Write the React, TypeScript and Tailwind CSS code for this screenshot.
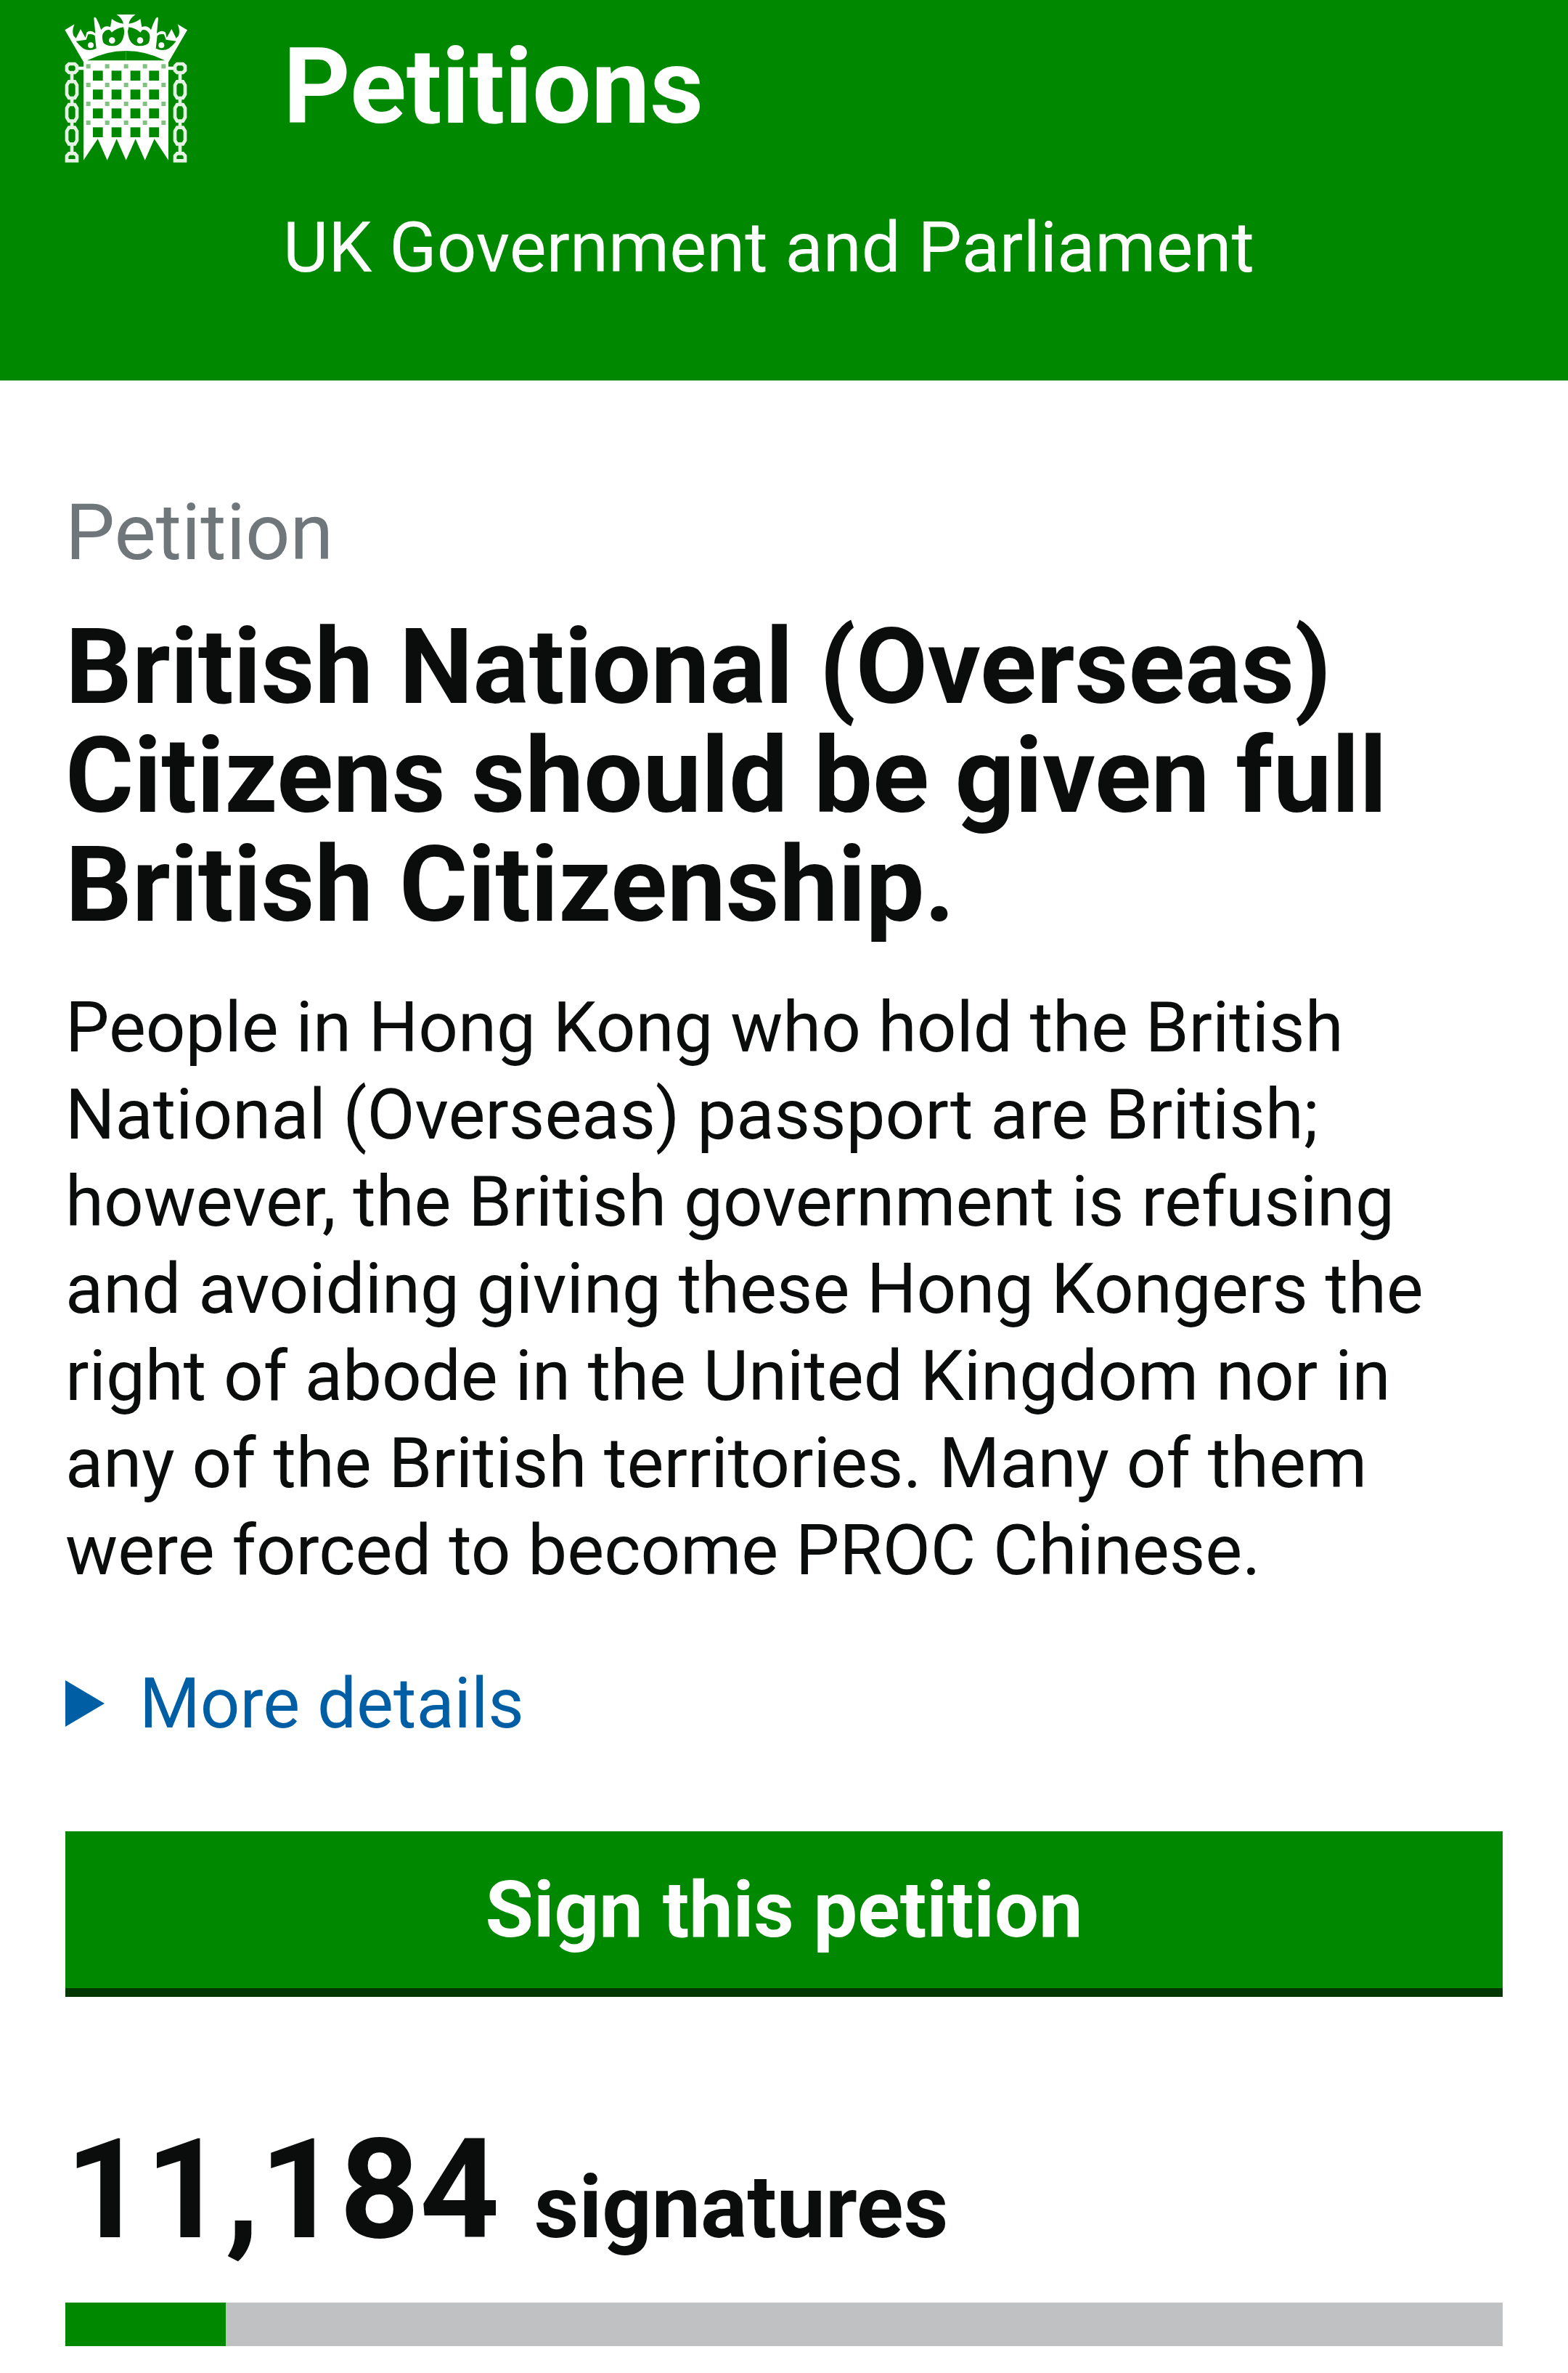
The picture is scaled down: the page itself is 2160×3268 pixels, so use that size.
import { useState } from "react";

const SIGNATURES = 11184;
const TARGET = 100000;

const COLUMNS = [174, 251, 329, 406];
const RIVETS = [155, 233, 311, 389, 466];
const LINKS = [371, 466, 561];

// Hanging chain at the side of the portcullis, cx is the centre of the links
const Chain = ({ cx }: { cx: number }) => (
  <g fill="none" stroke="#e4f3e4" strokeWidth={14}>
    <path d={`M${cx - 12} 264h24l9 9v18l-9 9h-24l-9-9v-18z`} />
    {LINKS.map((y) => (
      <path key={y} d={`M${cx - 12} ${y - 34}h24l9 15v38l-9 15h-24l-9-15v-38z`} />
    ))}
    {[319, 418, 513, 613].map((y) => (
      <path key={y} d={`M${cx} ${y - 16}v32`} />
    ))}
    <path d={`M${cx - 12} 634h24l9 10v20h-42v-20z`} />
  </g>
);

// Left half of the crown, drawn twice with the second one mirrored
const CrownHalf = () => (
  <>
    <path d="M135 256L58 124L98 100Q86 126 94 148L104 158L123 120L143 156L148 134Q164 120 184 138L178 74Q182 68 188 76Q200 98 208 124Q222 102 246 112L252 78Q270 94 300 98Q296 76 272 60H312V256z" />
    <path fill="#008800" d="M104 170L146 164L154 142Q172 138 182 148L188 200Q160 214 134 200Q116 186 104 170z" />
    <path fill="#008800" d="M214 142Q226 118 244 124L252 134Q272 116 300 112L304 130Q300 180 270 188Q236 194 218 178Q210 160 214 142z" />
    <circle cx={165} cy={187} r={12} />
    <circle cx={253} cy={167} r={13} />
    <path fill="#008800" d="M150 250Q228 210 312 210V250z" />
  </>
);

const Portcullis = () => (
  <svg className="h-[204px] w-[168px] overflow-visible text-white" viewBox="60 60 504 612" fill="currentColor" aria-hidden="true">
    <CrownHalf />
    <g transform="matrix(-1 0 0 1 622 0)">
      <CrownHalf />
    </g>
    <path d="M135 254H486V662L428 574L389 662L350 574L311 662L272 574L233 662L194 574L135 662z" />
    {[292, 370, 448, 526].map((y) =>
      COLUMNS.map((x) => <rect key={`${x}-${y}`} x={x} y={y} width={41} height={41} fill="#008800" />)
    )}
    {[274, 351, 429, 507].map((y) =>
      RIVETS.map((x) => <rect key={`${x}-${y}`} x={x - 9} y={y - 9} width={18} height={18} fill="#80c380" />)
    )}
    <path d="M110 275H140V289H110zM482 275H512V289H482z" />
    <Chain cx={87} />
    <Chain cx={534} />
  </svg>
);

const Header = () => (
  <header className="flex items-start gap-[132px] bg-[#008800] px-[90px] pt-5 pb-[123px] text-white">
    <Portcullis />
    <div className="pt-[25px]">
      <a href="#" className="block text-[144px] leading-[150px] font-bold">Petitions</a>
      <p className="mt-[86px] text-[96px] leading-[120px]">UK Government and Parliament</p>
    </div>
  </header>
);

const App = () => {
  const [open, setOpen] = useState(false);

  return (
    <div className="min-h-screen bg-white font-[Roboto,sans-serif] text-[#0b0c0c]">
      <Header />
      <main className="px-[90px] pt-[149px] pb-9">
        <p className="text-[108px] leading-[120px] text-[#6f777b]">Petition</p>
        <h1 className="mt-[51px] text-[144px] leading-[150px] font-bold">
          British National (Overseas) Citizens should be given full British Citizenship.
        </h1>
        <p className="mt-[61px] text-[96px] leading-[120px]">
          People in Hong Kong who hold the British National (Overseas) passport are British; however, the British
          government is refusing and avoiding giving these Hong Kongers the right of abode in the United Kingdom nor
          in any of the British territories. Many of them were forced to become PROC Chinese.
        </p>
        <button
          aria-expanded={open}
          onClick={() => setOpen(!open)}
          className="mt-[91px] flex items-center gap-12 text-[96px] leading-[120px] text-[#005ea5]"
        >
          <svg className="h-16 w-[54px]" viewBox="0 0 54 64" fill="currentColor" aria-hidden="true">
            <path d="M0 0L54 32L0 64z" />
          </svg>
          More details
        </button>
        <button className="mt-[116px] w-full bg-[#008800] py-12 text-[108px] leading-[120px] font-bold text-white shadow-[0_12px_0_#003700]">
          Sign this petition
        </button>
        <p className="mt-[178px] text-[192px] leading-[200px] font-bold">
          {SIGNATURES.toLocaleString("en-GB")} <span className="text-[120px] leading-none">signatures</span>
        </p>
        <div className="mt-[55px] h-[60px] bg-[#bfc1c3]">
          <div className="h-full bg-[#008800]" style={{ width: `${(SIGNATURES / TARGET) * 100}%` }} />
        </div>
      </main>
    </div>
  );
};

export default App;
